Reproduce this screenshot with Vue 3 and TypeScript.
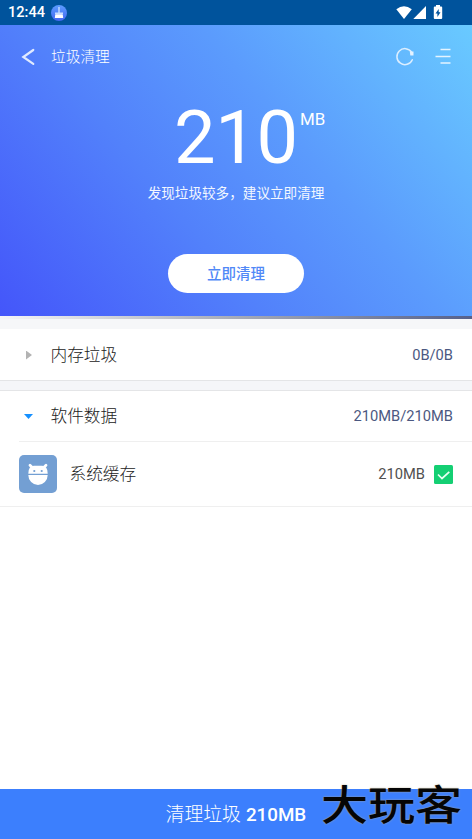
<script setup lang="ts">
interface Group {
  name: string
  size: string
  open: boolean
}

const memory: Group = { name: '内存垃圾', size: '0B/0B', open: false }
const software: Group = { name: '软件数据', size: '210MB/210MB', open: true }
const total = 210
</script>

<template>
  <main class="screen">
    <div class="status">
      <span class="clock">12:44</span>
      <svg class="app-dot" viewBox="0 0 16 16" width="16" height="16">
        <defs>
          <linearGradient id="dot" x1="0" y1="0" x2="0" y2="1">
            <stop offset="0" stop-color="#5c9cff" />
            <stop offset="1" stop-color="#4468f2" />
          </linearGradient>
        </defs>
        <circle cx="8" cy="8" r="8" fill="url(#dot)" />
        <path d="M7.300 2h1.400V7.500h3.300v1.500H4V7.500h3.300z" fill="#c6ddff" />
        <path d="M4.300 9.300h7.400l.5 3.700H3.800z" fill="#fff" />
      </svg>
      <svg class="signals" viewBox="0 0 48 16" width="48" height="16">
        <path d="M0.300 4.300Q8 -1.800 15.800 4.300L8 14z" fill="#fff" />
        <path d="M30 1v13H17.300z" fill="#fff" />
        <path d="M40 0h4v1.500h1.200q1 0 1 1V13q0 1-1 1h-6.400q-1 0-1-1V2.500q0-1 1-1H40z" fill="#fff" />
        <path d="M42.700 4v3.200h1.800L41.400 12V8.600h-1.900z" fill="#00539c" />
      </svg>
    </div>

    <header class="hero">
      <nav class="bar">
        <svg class="back" viewBox="0 0 14 18" width="14" height="18">
          <path d="M12.300 2L2.300 9l10 6.800" fill="none" stroke="#e0eaff" stroke-width="2.200" stroke-linecap="round" />
        </svg>
        <h1>垃圾清理</h1>
        <svg class="refresh" viewBox="0 0 20 20" width="20" height="20">
          <path d="M16.600 5.200A8 8 0 1 0 17.300 12.700" fill="none" stroke="#dceeff" stroke-width="1.500" stroke-linecap="round" />
          <path d="M14.800 4.500h3.700v3.900h-3.200z" fill="#e4f2ff" />
        </svg>
        <svg class="menu" viewBox="0 0 16 18" width="16" height="18">
          <path d="M5.500 1.500H15.500M.5 8.500H15.500M5.500 15H15.500" stroke="#e4f4ff" stroke-width="1.500" />
        </svg>
      </nav>
      <div class="amount">
        <span class="number">{{ total }}</span>
        <span class="unit">MB</span>
      </div>
      <p class="hint">发现垃圾较多，建议立即清理</p>
      <button class="clean">立即清理</button>
    </header>
    <div class="shade"></div>

    <section class="group first">
      <div class="row">
        <span class="arrow" :class="{ open: memory.open }"></span>
        <span class="name">{{ memory.name }}</span>
        <span class="size">{{ memory.size }}</span>
      </div>
    </section>

    <section class="group second">
      <div class="row">
        <span class="arrow" :class="{ open: software.open }"></span>
        <span class="name">{{ software.name }}</span>
        <span class="size">{{ software.size }}</span>
      </div>
      <div class="item">
        <svg class="robot" viewBox="0 0 38 38" width="38" height="38">
          <rect width="38" height="38" rx="5" fill="#739fd3" />
          <path d="M11 10.300l3 3M27 10.300l-3 3" stroke="#fff" stroke-width="2.800" stroke-linecap="round" />
          <path d="M9.300 18.800Q9.300 10.800 15 10.800h8Q28.700 10.800 28.700 18.800z" fill="#fff" />
          <path d="M9.300 20h19.400a9.700 10 0 0 1-19.400 0z" fill="#fff" />
          <circle cx="15.300" cy="16" r="1.100" fill="#739fd3" />
          <circle cx="22.700" cy="16" r="1.100" fill="#739fd3" />
        </svg>
        <span class="name">系统缓存</span>
        <span class="size">{{ total }}MB</span>
        <svg class="check" viewBox="0 0 19 19" width="19" height="19">
          <rect width="19" height="19" rx="1.500" fill="#14cf73" />
          <path d="M4 9.500l4 4L15.300 6.800" fill="none" stroke="#e9fff3" stroke-width="1.700" />
        </svg>
      </div>
    </section>

    <footer class="footer">
      <span class="label">清理垃圾</span>
      <b>{{ total }}MB</b>
      <span class="mark">大玩客</span>
    </footer>
  </main>
</template>

<style>
body {
  margin: 0;
  background: #fff;
}
</style>

<style scoped>
.screen {
  width: 472px;
  height: 839px;
  display: flex;
  flex-direction: column;
  overflow: hidden;
  background: #fff;
  font-family: Roboto, "Noto Sans CJK SC", sans-serif;
}

.status {
  flex: none;
  height: 25px;
  display: flex;
  align-items: center;
  box-sizing: border-box;
  padding: 0 25px 0 8px;
  background: #00539c;
  color: #fff;
}

.clock {
  width: 43px;
  font-size: 14.6px;
  font-weight: 500;
  line-height: 27px;
}

.signals {
  margin-left: auto;
  margin-top: 1px;
  margin-right: 3px;
}

.hero {
  flex: none;
  height: 291px;
  display: flex;
  flex-direction: column;
  align-items: center;
  background: linear-gradient(50deg, #4456fa 0%, #5281fb 37%, #5b9bfd 62%, #69caff 100%);
  color: #fff;
}

.bar {
  width: 100%;
  height: 64px;
  box-sizing: border-box;
  padding: 0 21px;
  display: flex;
  align-items: center;
}

h1 {
  margin: 0 auto 0 16px;
  font-size: 14.700px;
  font-weight: 300;
  line-height: 24px;
}

.menu {
  margin-left: 20px;
}

.amount {
  height: 90px;
  display: flex;
  align-items: flex-start;
  padding-left: 57px;
}

.number {
  width: 127px;
  font-size: 74px;
  font-weight: 400;
  line-height: 97px;
  letter-spacing: -0.300px;
}

.unit {
  width: 54px;
  margin-top: 20px;
  margin-left: -1px;
  margin-right: 1px;
  font-size: 16.900px;
  line-height: 20px;
}

.hint {
  margin: 4px 0 0;
  font-size: 13.600px;
  font-weight: 400;
  line-height: 20px;
  color: #f2f7ff;
}

.clean {
  width: 136px;
  height: 39px;
  margin: 51px 0 0;
  padding: 2px 0 0;
  border: 0;
  border-radius: 20px;
  background: #fff;
  color: #5088f7;
  font: 500 14.500px/37px Roboto, "Noto Sans CJK SC", sans-serif;
}

.shade {
  flex: none;
  height: 3px;
  background: linear-gradient(90deg, #f5f6f8 0%, #a9aeba 48%, #56618b 100%);
}

.group {
  flex: none;
  background: #fff;
}

.first {
  border-top: 10px solid #f6f7f9;
  border-bottom: 1px solid #e4e5e7;
}

.second {
  border-bottom: 1px solid #efefef;
}

.second::before {
  content: "";
  display: block;
  height: 9px;
  background: #f5f6f9;
  border-bottom: 1px solid #e4e5e7;
}

.row {
  height: 51px;
  display: flex;
  align-items: center;
  padding: 0 19px;
}

.second .row {
  height: 50px;
}

.arrow {
  box-sizing: border-box;
  width: 6px;
  height: 9px;
  margin: 1px 18.500px 0 7px;
  background: #b3b3b3;
  clip-path: polygon(0 0, 100% 50%, 0 100%);
}

.arrow.open {
  width: 9px;
  height: 5px;
  margin: 1px 17.500px 0 5px;
  background: #1690ff;
  clip-path: polygon(0 0, 100% 0, 50% 100%);
}

.name {
  margin-top: 2px;
  font-size: 16.700px;
  font-weight: 300;
  line-height: 24px;
  color: #222;
}

.size {
  margin-left: auto;
  font-size: 14.700px;
  line-height: 20px;
  color: #4b5881;
}

.item {
  height: 64px;
  margin-left: 19px;
  padding-right: 19px;
  display: flex;
  align-items: center;
  border-top: 1px solid #efefef;
}

.item .name {
  margin-left: 12.500px;
}

.item .size {
  color: #505050;
}

.check {
  margin-left: 9px;
}

.footer {
  position: relative;
  flex: none;
  height: 50px;
  margin-top: auto;
  display: flex;
  justify-content: center;
  gap: 5px;
  background: #3c7ffd;
  color: #fff;
  font-size: 18.800px;
  font-weight: 300;
  line-height: 52px;
}

.footer b {
  font-weight: 500;
}

.mark {
  position: absolute;
  right: 10px;
  top: -12px;
  color: #050505;
  font-family: "Noto Sans CJK SC", sans-serif;
  font-size: 47px;
  font-weight: 500;
  line-height: 50px;
  transform: scaleY(0.880);
  text-shadow: 0 0 2px #b5ad94;
}
</style>
